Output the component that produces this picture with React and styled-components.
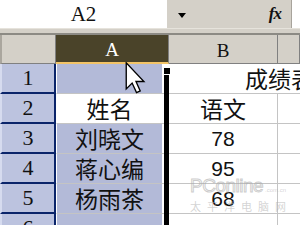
import React from 'react';
import styled, { createGlobalStyle } from 'styled-components';

const GlobalStyle = createGlobalStyle`
	html, body {
		margin: 0;
		padding: 0;
		background: #fff;
		overflow: hidden;
	}
	#root {
		width: 300px;
		height: 225px;
		overflow: hidden;
	}
`;

const LAVENDER = '#b3bad8';
const HEADER_LAV = '#bcc3df';
const NAVY = '#0a246a';
const FACE = '#d4d0c8';
const GRID = '#c4c4c4';
const CJK = `"Noto Sans CJK SC", "Liberation Sans", sans-serif`;

const Screen = styled.div`
	position: relative;
	width: 300px;
	height: 225px;
	overflow: hidden;
	background: #fff;
`;

const FormulaBar = styled.div`
	display: flex;
	height: 28px;
`;

const NameBox = styled.div`
	width: 167px;
	display: flex;
	align-items: center;
	justify-content: center;
	background: #fff;
	font-family: "Liberation Serif", serif;
	font-size: 21px;
	color: #111;
`;

const ButtonStrip = styled.div`
	width: 125px;
	display: flex;
	align-items: center;
	justify-content: space-between;
	padding: 0 10px 0 11px;
	box-sizing: border-box;
	background: ${FACE};
	border-right: 1px solid #a8a49c;
`;

const DropArrow = styled.div`
	width: 0;
	height: 0;
	border-left: 4px solid transparent;
	border-right: 4px solid transparent;
	border-top: 5px solid #000;
	margin-top: 2px;
`;

const Fx = styled.span`
	font-family: "Liberation Serif", serif;
	font-style: italic;
	font-weight: bold;
	font-size: 17px;
	color: #111;
	letter-spacing: -1px;
`;

const FormulaInput = styled.div`
	flex: 1;
	background: #fff;
`;

const Band = styled.div`
	height: 7px;
	box-sizing: border-box;
	background: ${FACE};
	border-top: 1px solid #e6e3dc;
	border-bottom: 2px solid #8c8a84;
`;

const Sheet = styled.div`
	display: grid;
	grid-template-columns: 56px 113px 109px 1fr;
	grid-template-rows: 29px repeat(6, 30px);
`;

const Corner = styled.div`
	background: ${FACE};
	border-left: 2px solid #aaa69e;
	border-right: 1px solid #808080;
	border-bottom: 1px solid #808080;
`;

const ColHead = styled.div`
	display: flex;
	align-items: center;
	justify-content: center;
	font-family: "Liberation Serif", serif;
	font-size: 19px;
	background: ${p => (p.$active ? '#4a4329' : FACE)};
	color: ${p => (p.$active ? '#fff' : '#111')};
	border-right: 1px solid #808080;
	border-bottom: ${p => (p.$active ? '2px solid #f2c468' : '1px solid #808080')};
	padding-top: 3px;
	box-sizing: border-box;
`;

const RowHead = styled.div`
	display: flex;
	align-items: center;
	justify-content: center;
	background: ${HEADER_LAV};
	border-left: 2px solid #d6dbef;
	border-right: 2px solid ${NAVY};
	border-bottom: 2px solid ${NAVY};
	font-family: "Liberation Serif", serif;
	font-size: 22px;
	line-height: 1;
	color: #111;
	box-sizing: border-box;
`;

const Cell = styled.div`
	display: flex;
	align-items: center;
	justify-content: center;
	box-sizing: border-box;
	border-bottom: 1px solid ${GRID};
	border-right: ${p => (p.$noRight ? 'none' : `1px solid ${GRID}`)};
	font-family: ${p => (p.$num ? `"Liberation Sans", sans-serif` : CJK)};
	font-size: ${p => (p.$num ? '21px' : '23px')};
	line-height: 1;
	color: #111;
	white-space: nowrap;
`;

const SelCell = styled(Cell)`
	background: ${p => (p.$active ? '#fff' : LAVENDER)};
	border-left: 1px solid #fff;
	border-right: none;
	box-shadow: inset -7px 0 0 #fff;
	padding-right: 7px;
`;

const TitleCell = styled(Cell)`
	grid-column: 3 / 5;
	justify-content: flex-start;
	padding-left: 76px;
	border-right: none;
`;

const SelectionEdge = styled.div`
	position: absolute;
	left: 164px;
	top: 74px;
	width: 5px;
	bottom: 0;
	background: #000;
`;

const FillHandle = styled.div`
	position: absolute;
	left: 163px;
	top: 67px;
	width: 8px;
	height: 8px;
	background: #000;
	border: 1px solid #fff;
	box-sizing: border-box;
`;

const Cursor = styled.svg`
	position: absolute;
	left: 125px;
	top: 62px;
`;

const Watermark = styled.div`
	position: absolute;
	left: 190px;
	top: 176px;
	display: flex;
	flex-direction: column;
	align-items: flex-start;
	pointer-events: none;
	color: rgba(175, 175, 175, 0.55);
`;

const MarkLogo = styled.span`
	font-family: "Liberation Sans", sans-serif;
	font-size: 19px;
	letter-spacing: -0.5px;
	line-height: 19px;
	color: transparent;
	-webkit-text-stroke: 1px rgba(170, 170, 170, 0.6);
`;

const MarkSmall = styled.span`
	font-family: "Liberation Sans", sans-serif;
	font-size: 6px;
	margin-left: 2px;
`;

const MarkSub = styled.span`
	font-family: ${CJK};
	font-size: 11px;
	letter-spacing: 6px;
	line-height: 14px;
	margin-top: 3px;
`;

const rows = [
	{ n: 1, name: '', title: '成绩表' },
	{ n: 2, name: '姓名', score: '语文' },
	{ n: 3, name: '刘晓文', score: '78' },
	{ n: 4, name: '蒋心编', score: '95' },
	{ n: 5, name: '杨雨茶', score: '68' },
	{ n: 6, name: '', score: '' }
];

export default function App() {
	return (
		<Screen>
			<GlobalStyle />
			<FormulaBar>
				<NameBox>A2</NameBox>
				<ButtonStrip>
					<DropArrow />
					<Fx>fx</Fx>
				</ButtonStrip>
				<FormulaInput />
			</FormulaBar>
			<Band />
			<Sheet>
				<Corner />
				<ColHead $active>A</ColHead>
				<ColHead>B</ColHead>
				<ColHead />
				{rows.map(r => (
					<React.Fragment key={r.n}>
						<RowHead>{r.n}</RowHead>
						<SelCell $active={r.n === 2}>{r.name}</SelCell>
						{r.title ? (
							<TitleCell>{r.title}</TitleCell>
						) : (
							<>
								<Cell $num={r.n > 2}>{r.score}</Cell>
								<Cell $noRight />
							</>
						)}
					</React.Fragment>
				))}
			</Sheet>

			<SelectionEdge />
			<FillHandle />

			<Watermark>
				<span>
					<MarkLogo>PConline</MarkLogo>
					<MarkSmall>.com.cn</MarkSmall>
				</span>
				<MarkSub>太平洋电脑网</MarkSub>
			</Watermark>

			<Cursor width="21" height="32" viewBox="0 0 12 19">
				<path
					d="M0.5 0.5 L0.5 16 L4 12.5 L6.6 18.2 L8.8 17.2 L6.3 11.6 L11 11.6 Z"
					fill="#fff"
					stroke="#000"
					strokeWidth="0.8"
					strokeLinejoin="miter"
				/>
			</Cursor>
		</Screen>
	);
}
